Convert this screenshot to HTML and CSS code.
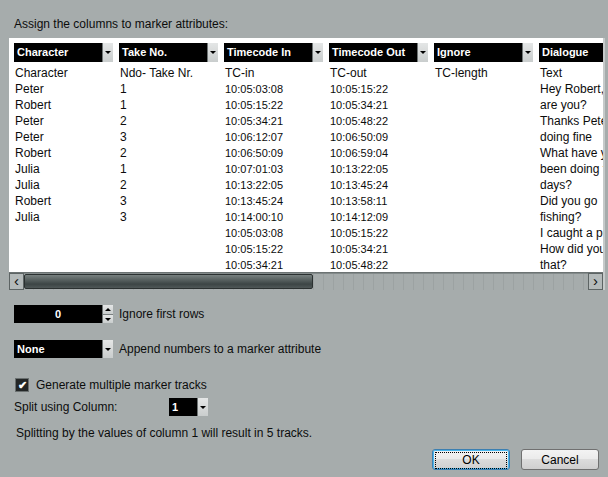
FILE: index.html
```html
<html>
<head>
    <title>Import Marker List</title>
    <link rel="stylesheet" href="styles.css">
</head>
<body>
<div class="dialog">
    <div class="title">Assign the columns to marker attributes:</div>

    <div class="sheet">
        <div class="cols">
            <div class="col">
                <div class="head"><span class="label">Character</span><span class="drop"></span></div>
                <div class="cell">Character</div>
                <div class="cell">Peter</div>
                <div class="cell">Robert</div>
                <div class="cell">Peter</div>
                <div class="cell">Peter</div>
                <div class="cell">Robert</div>
                <div class="cell">Julia</div>
                <div class="cell">Julia</div>
                <div class="cell">Robert</div>
                <div class="cell">Julia</div>
            </div>
            <div class="col">
                <div class="head"><span class="label">Take No.</span><span class="drop"></span></div>
                <div class="cell">Ndo- Take Nr.</div>
                <div class="cell">1</div>
                <div class="cell">1</div>
                <div class="cell">2</div>
                <div class="cell">3</div>
                <div class="cell">2</div>
                <div class="cell">1</div>
                <div class="cell">2</div>
                <div class="cell">3</div>
                <div class="cell">3</div>
            </div>
            <div class="col tc">
                <div class="head"><span class="label">Timecode In</span><span class="drop"></span></div>
                <div class="cell first">TC-in</div>
                <div class="cell">10:05:03:08</div>
                <div class="cell">10:05:15:22</div>
                <div class="cell">10:05:34:21</div>
                <div class="cell">10:06:12:07</div>
                <div class="cell">10:06:50:09</div>
                <div class="cell">10:07:01:03</div>
                <div class="cell">10:13:22:05</div>
                <div class="cell">10:13:45:24</div>
                <div class="cell">10:14:00:10</div>
                <div class="cell">10:05:03:08</div>
                <div class="cell">10:05:15:22</div>
                <div class="cell">10:05:34:21</div>
            </div>
            <div class="col tc">
                <div class="head"><span class="label">Timecode Out</span><span class="drop"></span></div>
                <div class="cell first">TC-out</div>
                <div class="cell">10:05:15:22</div>
                <div class="cell">10:05:34:21</div>
                <div class="cell">10:05:48:22</div>
                <div class="cell">10:06:50:09</div>
                <div class="cell">10:06:59:04</div>
                <div class="cell">10:13:22:05</div>
                <div class="cell">10:13:45:24</div>
                <div class="cell">10:13:58:11</div>
                <div class="cell">10:14:12:09</div>
                <div class="cell">10:05:15:22</div>
                <div class="cell">10:05:34:21</div>
                <div class="cell">10:05:48:22</div>
            </div>
            <div class="col">
                <div class="head"><span class="label">Ignore</span><span class="drop"></span></div>
                <div class="cell">TC-length</div>
            </div>
            <div class="col">
                <div class="head"><span class="label">Dialogue</span><span class="drop"></span></div>
                <div class="cell">Text</div>
                <div class="cell">Hey Robert, how</div>
                <div class="cell">are you?</div>
                <div class="cell">Thanks Peter, I'm</div>
                <div class="cell">doing fine</div>
                <div class="cell">What have you</div>
                <div class="cell">been doing these</div>
                <div class="cell">days?</div>
                <div class="cell">Did you go</div>
                <div class="cell">fishing?</div>
                <div class="cell">I caught a perch</div>
                <div class="cell">How did you do</div>
                <div class="cell">that?</div>
            </div>
        </div>
        <div class="hscroll">
            <span class="arrow">&lsaquo;</span>
            <div class="track"><div class="thumb"></div></div>
            <span class="arrow">&rsaquo;</span>
        </div>
    </div>

    <div class="row spin-row">
        <div class="field spin">
            <span class="value">0</span>
            <span class="spin-btns"><span class="up"></span><span class="down"></span></span>
        </div>
        <span class="caption">Ignore first rows</span>
    </div>

    <div class="row append-row">
        <div class="field select">
            <span class="value left">None</span>
            <span class="drop"></span>
        </div>
        <span class="caption">Append numbers to a marker attribute</span>
    </div>

    <label class="check-row">
        <span class="checkbox">&#10004;</span>
        <span>Generate multiple marker tracks</span>
    </label>

    <div class="split-row">
        <span class="split-label">Split using Column:</span>
        <div class="field small-select">
            <span class="value left">1</span>
            <span class="drop"></span>
        </div>
    </div>

    <div class="note">Splitting by the values of column 1 will result in 5 tracks.</div>

    <div class="buttons">
        <button class="btn default"><span>OK</span></button>
        <button class="btn">Cancel</button>
    </div>
</div>
</body>
</html>
```

FILE: styles.css
```css
body {
    margin: 0;
    background: #a6acac;
    font-family: "Liberation Sans", Arial, sans-serif;
    font-size: 12px;
    color: #0c0c0c;
}
.dialog {
    width: 608px;
    height: 477px;
    padding: 0 0 0 9px;
    box-sizing: border-box;
}
.title {
    padding: 17px 0 0 5px;
    height: 21px;
    line-height: 14px;
}
.sheet {
    width: 594px;
    background: #fff;
    border-right: 2px solid #c6caca;
}
.cols {
    display: flex;
    gap: 6px;
    padding: 5px 0 0 5px;
    height: 229px;
    overflow: hidden;
    white-space: nowrap;
}
.col {
    flex: 0 0 99px;
    width: 99px;
}
.head {
    display: flex;
    height: 19px;
    margin-bottom: 3px;
}
.label {
    flex: 1;
    background: #000;
    color: #fff;
    font-weight: bold;
    font-size: 11px;
    line-height: 19px;
    padding-left: 3px;
}
.drop {
    width: 10px;
    background: linear-gradient(#e4e6e6, #c9cdcd);
    border-left: 1px solid #6e7474;
    position: relative;
}
.drop::after {
    content: "";
    position: absolute;
    left: 2px;
    top: 8px;
    border-left: 3px solid transparent;
    border-right: 3px solid transparent;
    border-top: 3px solid #000;
}
.cell {
    height: 16px;
    line-height: 16px;
    padding-left: 1px;
}
.tc .cell {
    font-size: 11px;
}
.tc .cell.first {
    font-size: 12px;
}
.hscroll {
    display: flex;
    height: 17px;
    background: #8f9797;
    border-top: 1px solid #6c7373;
}
.arrow {
    width: 15px;
    background: #b4baba;
    border: 1px solid #5d6464;
    box-sizing: border-box;
    text-align: center;
    font-size: 15px;
    line-height: 13px;
}
.track {
    flex: 1;
    background: repeating-linear-gradient(90deg, #a6acac 0, #a6acac 9px, #9ca2a2 9px, #9ca2a2 10px);
    border-top: 1px solid #838a8a;
}
.thumb {
    width: 289px;
    height: 15px;
    background: linear-gradient(#77807f, #3c4545 70%, #4f5757);
    border: 1px solid #2b3131;
    box-sizing: border-box;
    border-radius: 2px;
}
.row {
    display: flex;
    align-items: center;
    padding-left: 5px;
}
.spin-row {
    margin-top: 15px;
}
.append-row {
    margin-top: 17px;
}
.field {
    display: flex;
    height: 18px;
    background: #000;
    color: #fff;
    font-weight: bold;
    font-size: 11px;
}
.spin, .select {
    width: 99px;
}
.value {
    flex: 1;
    line-height: 18px;
    text-align: center;
}
.value.left {
    text-align: left;
    padding-left: 3px;
}
.spin-btns {
    width: 10px;
    display: flex;
    flex-direction: column;
    border-left: 1px solid #6e7474;
}
.spin-btns span {
    flex: 1;
    background: linear-gradient(#e4e6e6, #c9cdcd);
    position: relative;
}
.spin-btns .up {
    border-bottom: 1px solid #7a8080;
}
.spin-btns span::after {
    content: "";
    position: absolute;
    left: 2px;
    top: 3px;
    border-left: 3px solid transparent;
    border-right: 3px solid transparent;
}
.spin-btns .up::after {
    border-bottom: 3px solid #000;
}
.spin-btns .down::after {
    border-top: 3px solid #000;
}
.caption {
    margin-left: 6px;
}
.check-row {
    display: flex;
    align-items: center;
    margin: 20px 0 0 6px;
}
.checkbox {
    width: 12px;
    height: 12px;
    background: #232626;
    border: 1px solid #6a7070;
    color: #fff;
    font-size: 11px;
    font-weight: bold;
    line-height: 12px;
    text-align: center;
    margin-right: 7px;
}
.split-row {
    display: flex;
    align-items: center;
    margin: 6px 0 0 5px;
}
.split-label {
    width: 155px;
}
.small-select {
    width: 39px;
}
.note {
    margin: 10px 0 0 7px;
}
.buttons {
    display: flex;
    justify-content: flex-end;
    gap: 11px;
    margin: 9px 9px 0 0;
}
.btn {
    width: 78px;
    height: 21px;
    font-family: "Liberation Sans", Arial, sans-serif;
    font-size: 12px;
    color: #000;
    border: 1px solid #707070;
    border-radius: 3px;
    background: linear-gradient(#f3f3f3 0, #ebebeb 45%, #dcdcdc 50%, #cfcfcf 100%);
    padding: 0;
}
.btn.default {
    border-color: #3c7fb1;
    box-shadow: 0 0 0 1px #48b6ee inset;
    padding: 2px;
}
.btn.default span {
    display: block;
    height: 15px;
    line-height: 15px;
    border: 1px dotted #000;
}
```
